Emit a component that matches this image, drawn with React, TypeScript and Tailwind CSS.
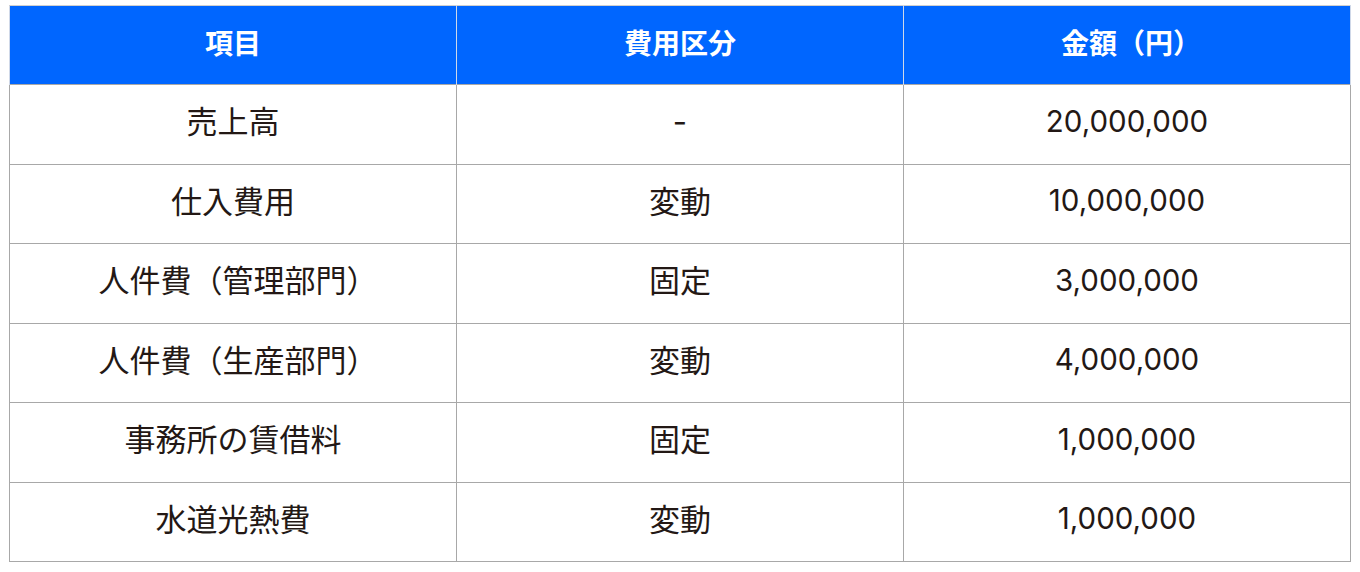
import React from "react";

const rows: [string, string, string][] = [
  ["売上高", "-", "20,000,000"],
  ["仕入費用", "変動", "10,000,000"],
  ["人件費（管理部門）", "固定", "3,000,000"],
  ["人件費（生産部門）", "変動", "4,000,000"],
  ["事務所の賃借料", "固定", "1,000,000"],
  ["水道光熱費", "変動", "1,000,000"],
];

export default function App() {
  return (
    <div
      className="w-[1360px] h-[572px] bg-white pt-[5px] pl-[9px]"
      style={{ fontFamily: 'Inter, "Noto Sans CJK JP", "Noto Sans", sans-serif' }}
    >
      <table className="w-[1342px] border-collapse table-fixed text-[#231815]">
        <thead>
          <tr className="h-[79px] bg-[#0066ff] text-white">
            {["項目", "費用区分", "金額（円）"].map((h, i) => (
              <th
                key={i}
                className={`font-bold text-[28px] text-center border-x border-t border-[#d0d0d0] border-x-[#cfd8e8] p-0 pb-[2px] ${
                  h.endsWith("）") ? "pl-[8px]" : ""
                }`}
              >
                {h}
              </th>
            ))}
          </tr>
        </thead>
        <tbody>
          {rows.map((r, i) => (
            <tr key={i} className={i % 2 === 0 ? "h-[80px]" : "h-[79px]"}>
              {r.map((c, j) => (
                <td
                  key={j}
                  className={`border border-[#a8a8a8] text-center p-0 pb-[6px] font-normal leading-none ${
                    j === 2 ? "text-[29.5px]" : "text-[31px]"
                  } ${c.endsWith("）") ? "pl-[10px]" : ""}`}
                >
                  {c}
                </td>
              ))}
            </tr>
          ))}
        </tbody>
      </table>
    </div>
  );
}
